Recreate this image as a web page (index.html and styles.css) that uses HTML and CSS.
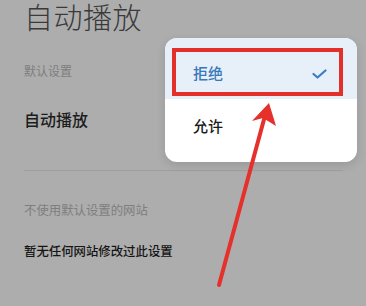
FILE: index.html
```html
<!DOCTYPE html>
<html lang="zh-CN">
<head>
<meta charset="utf-8">
<link rel="stylesheet" href="styles.css">
</head>
<body>
<div class="page">
  <div class="title">自动播放</div>
  <div class="label">默认设置</div>
  <div class="setting">自动播放</div>
  <div class="divider"></div>
  <div class="label label-sites">不使用默认设置的网站</div>
  <div class="empty">暂无任何网站修改过此设置</div>

  <div class="menu">
    <div class="option option-selected">
      <span>拒绝</span>
      <svg class="check" width="15" height="10" viewBox="0 0 15 10"><path d="M1.5 5 L5.5 8.5 L13.5 1.5" fill="none" stroke="#3b7dc2" stroke-width="2.2" stroke-linecap="round" stroke-linejoin="round"/></svg>
    </div>
    <div class="option"><span>允许</span></div>
    <div class="highlight"></div>
  </div>

  <svg class="arrow" width="366" height="306" viewBox="0 0 366 306">
    <line x1="219" y1="285" x2="266" y2="112" stroke="#e5302b" stroke-width="4" stroke-linecap="round"/>
    <polygon points="269,103 252,121 263,118 276,126" fill="#e5302b"/>
  </svg>
</div>
</body>
</html>
```
FILE: styles.css
```css
html, body {
  margin: 0;
  padding: 0;
}
body {
  background: #adadad;
  font-family: "Noto Sans CJK SC", "Noto Sans", sans-serif;
}
.page {
  position: relative;
  width: 366px;
  height: 306px;
  overflow: hidden;
  padding-left: 24px;
  padding-top: 1px;
  box-sizing: border-box;
}
.title {
  font-size: 29px;
  line-height: 30px;
  font-weight: 300;
  color: #3a3a3a;
  letter-spacing: 0.5px;
}
.label {
  margin-top: 30px;
  font-size: 12px;
  line-height: 20px;
  color: #7e7e7e;
}
.setting {
  margin-top: 26px;
  font-size: 16px;
  line-height: 24px;
  color: #1c1c1c;
  font-weight: 500;
}
.divider {
  margin-top: 39px;
  margin-right: 23px;
  height: 1px;
  background: #9e9e9e;
}
.label-sites {
  font-size: 12.4px;
  margin-top: 29px;
}
.empty {
  margin-top: 21px;
  font-size: 12.4px;
  line-height: 20px;
  color: #151515;
  font-weight: 500;
}
.menu {
  position: absolute;
  left: 165px;
  top: 38px;
  width: 192px;
  height: 124px;
  background: #ffffff;
  border-radius: 12px;
  overflow: hidden;
  display: flex;
  flex-direction: column;
  box-shadow: 0 3px 10px rgba(0, 0, 0, 0.12);
}
.option {
  flex: 1;
  display: flex;
  align-items: center;
  justify-content: space-between;
  padding: 0 30px 0 28px;
  font-size: 15px;
  color: #1a1a1a;
  font-weight: 500;
}
.option-selected {
  background: #e7f0f8;
  color: #3877b9;
  padding-top: 8px;
}
.option + .option {
  padding-bottom: 10px;
}
.highlight {
  position: absolute;
  left: 7px;
  top: 10px;
  width: 171px;
  height: 48px;
  border: 4.5px solid #e3302b;
  box-sizing: border-box;
}
.check {
  margin-top: 2px;
}
.arrow {
  position: absolute;
  left: 0;
  top: 0;
  pointer-events: none;
}
```
